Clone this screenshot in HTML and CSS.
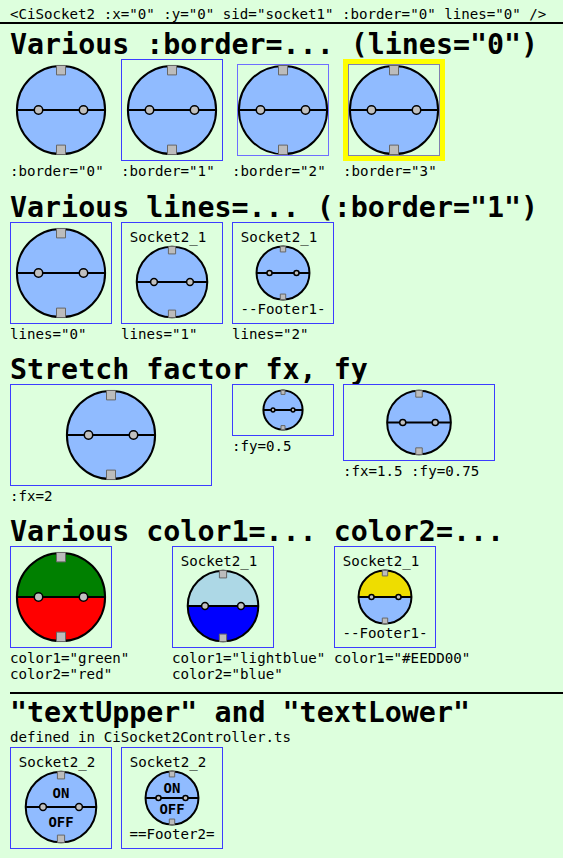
FILE: index.html
```html
<!DOCTYPE html>
<html>
<head>
<meta charset="utf-8">
<link rel="stylesheet" href="styles.css">
</head>
<body>
<div class="top">&lt;CiSocket2 :x="0" :y="0" sid="socket1" :border="0" lines="0" /&gt;</div>
<div class="main">

<div class="title first">Various :border=... (lines="0")</div>
<div class="row">
  <div class="cell">
    <div class="sock b0"><svg viewBox="-50 -50 100 100"><path class="u" d="M-49 0A49 49 0 0 1 49 0Z"/><path class="l" d="M-49 0A49 49 0 0 0 49 0Z"/><circle class="o" r="49"/><path class="m" d="M-49 0H49"/><rect class="q" x="-5" y="-49.5" width="10" height="10.5"/><rect class="q" x="-5" y="39" width="10" height="10.5"/><circle class="p" cx="-25" r="4.7"/><circle class="p" cx="25" r="4.7"/></svg></div>
    <div class="label">:border="0"</div>
  </div>
  <div class="cell">
    <div class="sock"><svg viewBox="-50 -50 100 100"><path class="u" d="M-49 0A49 49 0 0 1 49 0Z"/><path class="l" d="M-49 0A49 49 0 0 0 49 0Z"/><circle class="o" r="49"/><path class="m" d="M-49 0H49"/><rect class="q" x="-5" y="-49.5" width="10" height="10.5"/><rect class="q" x="-5" y="39" width="10" height="10.5"/><circle class="p" cx="-25" r="4.7"/><circle class="p" cx="25" r="4.7"/></svg></div>
    <div class="label">:border="1"</div>
  </div>
  <div class="cell">
    <div class="sock b2"><svg viewBox="-50 -50 100 100"><path class="u" d="M-49 0A49 49 0 0 1 49 0Z"/><path class="l" d="M-49 0A49 49 0 0 0 49 0Z"/><circle class="o" r="49"/><path class="m" d="M-49 0H49"/><rect class="q" x="-5" y="-49.5" width="10" height="10.5"/><rect class="q" x="-5" y="39" width="10" height="10.5"/><circle class="p" cx="-25" r="4.7"/><circle class="p" cx="25" r="4.7"/></svg></div>
    <div class="label">:border="2"</div>
  </div>
  <div class="cell">
    <div class="sock b3"><div class="b3in"><svg viewBox="-50 -50 100 100"><path class="u" d="M-49 0A49 49 0 0 1 49 0Z"/><path class="l" d="M-49 0A49 49 0 0 0 49 0Z"/><circle class="o" r="49"/><path class="m" d="M-49 0H49"/><rect class="q" x="-5" y="-49.5" width="10" height="10.5"/><rect class="q" x="-5" y="39" width="10" height="10.5"/><circle class="p" cx="-25" r="4.7"/><circle class="p" cx="25" r="4.7"/></svg></div></div>
    <div class="label">:border="3"</div>
  </div>
</div>

<div class="title">Various lines=... (:border="1")</div>
<div class="row">
  <div class="cell">
    <div class="sock"><svg viewBox="-50 -50 100 100"><path class="u" d="M-49 0A49 49 0 0 1 49 0Z"/><path class="l" d="M-49 0A49 49 0 0 0 49 0Z"/><circle class="o" r="49"/><path class="m" d="M-49 0H49"/><rect class="q" x="-5" y="-49.5" width="10" height="10.5"/><rect class="q" x="-5" y="39" width="10" height="10.5"/><circle class="p" cx="-25" r="4.7"/><circle class="p" cx="25" r="4.7"/></svg></div>
    <div class="label">lines="0"</div>
  </div>
  <div class="cell">
    <div class="sock"><div class="hd">Socket2_1</div><svg viewBox="-50 -50 100 100"><path class="u" d="M-49 0A49 49 0 0 1 49 0Z"/><path class="l" d="M-49 0A49 49 0 0 0 49 0Z"/><circle class="o" r="49"/><path class="m" d="M-49 0H49"/><rect class="q" x="-5" y="-49.5" width="10" height="10.5"/><rect class="q" x="-5" y="39" width="10" height="10.5"/><circle class="p" cx="-25" r="4.7"/><circle class="p" cx="25" r="4.7"/></svg></div>
    <div class="label">lines="1"</div>
  </div>
  <div class="cell">
    <div class="sock"><div class="hd">Socket2_1</div><svg viewBox="-50 -50 100 100"><path class="u" d="M-49 0A49 49 0 0 1 49 0Z"/><path class="l" d="M-49 0A49 49 0 0 0 49 0Z"/><circle class="o" r="49"/><path class="m" d="M-49 0H49"/><rect class="q" x="-5" y="-49.5" width="10" height="10.5"/><rect class="q" x="-5" y="39" width="10" height="10.5"/><circle class="p" cx="-25" r="4.7"/><circle class="p" cx="25" r="4.7"/></svg><div class="ft">--Footer1-</div></div>
    <div class="label">lines="2"</div>
  </div>
</div>

<div class="title">Stretch factor fx, fy</div>
<div class="row">
  <div class="cell gap-wide">
    <div class="sock fx2"><svg viewBox="-50 -50 100 100"><path class="u" d="M-49 0A49 49 0 0 1 49 0Z"/><path class="l" d="M-49 0A49 49 0 0 0 49 0Z"/><circle class="o" r="49"/><path class="m" d="M-49 0H49"/><rect class="q" x="-5" y="-49.5" width="10" height="10.5"/><rect class="q" x="-5" y="39" width="10" height="10.5"/><circle class="p" cx="-25" r="4.7"/><circle class="p" cx="25" r="4.7"/></svg></div>
    <div class="label">:fx=2</div>
  </div>
  <div class="cell">
    <div class="sock fy05"><svg viewBox="-50 -50 100 100"><path class="u" d="M-49 0A49 49 0 0 1 49 0Z"/><path class="l" d="M-49 0A49 49 0 0 0 49 0Z"/><circle class="o" r="49"/><path class="m" d="M-49 0H49"/><rect class="q" x="-5" y="-49.5" width="10" height="10.5"/><rect class="q" x="-5" y="39" width="10" height="10.5"/><circle class="p" cx="-25" r="4.7"/><circle class="p" cx="25" r="4.7"/></svg></div>
    <div class="label">:fy=0.5</div>
  </div>
  <div class="cell">
    <div class="sock fx15"><svg viewBox="-50 -50 100 100"><path class="u" d="M-49 0A49 49 0 0 1 49 0Z"/><path class="l" d="M-49 0A49 49 0 0 0 49 0Z"/><circle class="o" r="49"/><path class="m" d="M-49 0H49"/><rect class="q" x="-5" y="-49.5" width="10" height="10.5"/><rect class="q" x="-5" y="39" width="10" height="10.5"/><circle class="p" cx="-25" r="4.7"/><circle class="p" cx="25" r="4.7"/></svg></div>
    <div class="label">:fx=1.5 :fy=0.75</div>
  </div>
</div>

<div class="title">Various color1=... color2=...</div>
<div class="row">
  <div class="cell col">
    <div class="sock"><svg class="c-green" viewBox="-50 -50 100 100"><path class="u" d="M-49 0A49 49 0 0 1 49 0Z"/><path class="l" d="M-49 0A49 49 0 0 0 49 0Z"/><circle class="o" r="49"/><path class="m" d="M-49 0H49"/><rect class="q" x="-5" y="-49.5" width="10" height="10.5"/><rect class="q" x="-5" y="39" width="10" height="10.5"/><circle class="p" cx="-25" r="4.7"/><circle class="p" cx="25" r="4.7"/></svg></div>
    <div class="label">color1="green"
color2="red"</div>
  </div>
  <div class="cell col">
    <div class="sock"><div class="hd">Socket2_1</div><svg class="c-lblue" viewBox="-50 -50 100 100"><path class="u" d="M-49 0A49 49 0 0 1 49 0Z"/><path class="l" d="M-49 0A49 49 0 0 0 49 0Z"/><circle class="o" r="49"/><path class="m" d="M-49 0H49"/><rect class="q" x="-5" y="-49.5" width="10" height="10.5"/><rect class="q" x="-5" y="39" width="10" height="10.5"/><circle class="p" cx="-25" r="4.7"/><circle class="p" cx="25" r="4.7"/></svg></div>
    <div class="label">color1="lightblue"
color2="blue"</div>
  </div>
  <div class="cell col">
    <div class="sock"><div class="hd">Socket2_1</div><svg class="c-yel" viewBox="-50 -50 100 100"><path class="u" d="M-49 0A49 49 0 0 1 49 0Z"/><path class="l" d="M-49 0A49 49 0 0 0 49 0Z"/><circle class="o" r="49"/><path class="m" d="M-49 0H49"/><rect class="q" x="-5" y="-49.5" width="10" height="10.5"/><rect class="q" x="-5" y="39" width="10" height="10.5"/><circle class="p" cx="-25" r="4.7"/><circle class="p" cx="25" r="4.7"/></svg><div class="ft">--Footer1-</div></div>
    <div class="label">color1="#EEDD00"</div>
  </div>
</div>

<div class="sep"></div>
<div class="title after-sep">"textUpper" and "textLower"</div>
<div class="note">defined in CiSocket2Controller.ts</div>
<div class="row r5">
  <div class="cell">
    <div class="sock"><div class="hd">Socket2_2</div><svg class="onoff big" viewBox="-50 -50 100 100"><path class="u" d="M-49 0A49 49 0 0 1 49 0Z"/><path class="l" d="M-49 0A49 49 0 0 0 49 0Z"/><circle class="o" r="49"/><path class="m" d="M-49 0H49"/><rect class="q" x="-5" y="-49.5" width="10" height="10.5"/><rect class="q" x="-5" y="39" width="10" height="10.5"/><circle class="p" cx="-25" r="4.7"/><circle class="p" cx="25" r="4.7"/><text class="t" x="0" y="-13">ON</text><text class="t" x="0" y="27.3">OFF</text></svg></div>
  </div>
  <div class="cell">
    <div class="sock"><div class="hd">Socket2_2</div><svg class="onoff small" viewBox="-50 -50 100 100"><path class="u" d="M-49 0A49 49 0 0 1 49 0Z"/><path class="l" d="M-49 0A49 49 0 0 0 49 0Z"/><circle class="o" r="49"/><path class="m" d="M-49 0H49"/><rect class="q" x="-5" y="-49.5" width="10" height="10.5"/><rect class="q" x="-5" y="39" width="10" height="10.5"/><circle class="p" cx="-25" r="4.7"/><circle class="p" cx="25" r="4.7"/><text class="t" x="0" y="-10">ON</text><text class="t" x="0" y="29">OFF</text></svg><div class="ft">==Footer2=</div></div>
  </div>
</div>

</div>
</body>
</html>
```

FILE: styles.css
```css
html, body {
  margin: 0;
  background: #ddffdd;
}
body {
  font-family: "DejaVu Sans Mono", monospace;
  font-size: 14.15px;
  line-height: 16.3px;
  color: #000;
}
.top {
  padding: 6px 10px 0;
  border-bottom: 2px solid #000;
  white-space: pre;
}
.main {
  padding-left: 10px;
}
.title {
  font-size: 28.3px;
  font-weight: bold;
  line-height: 28px;
  margin-top: 14px;
  white-space: pre;
}
.title.first {
  margin-top: 7px;
}
.title.after-sep {
  margin-top: 5px;
}
.sep {
  margin-top: 9px;
  border-top: 2px solid #000;
}
.note {
  margin-top: 2px;
}
.row {
  display: flex;
  gap: 9px;
  align-items: flex-start;
}
.row.r5 {
  margin-top: 2px;
}
.cell {
  display: flex;
  flex-direction: column;
  align-items: flex-start;
}
.cell.gap-wide {
  margin-right: 11px;
}
.cell.col {
  width: 153px;
}
.label {
  margin-top: 2px;
  white-space: pre;
}
.sock {
  box-sizing: border-box;
  width: 102px;
  height: 102px;
  border: 1px solid #3c3cff;
  padding: 5px;
  display: flex;
  flex-direction: column;
}
.sock svg {
  display: block;
  flex: 1;
  width: 100%;
  min-height: 0;
  overflow: visible;
}
.sock .hd,
.sock .ft {
  height: 18px;
  line-height: 18px;
  text-align: center;
  white-space: pre;
  flex: none;
}
.sock .hd {
  padding-right: 8px;
}
.sock.b0 {
  border-color: transparent;
}
.sock.b2 {
  width: 92px;
  height: 92px;
  margin: 5px;
  padding: 0;
  border-color: #6e6eff;
}
.sock.b3 {
  border: 5px solid #ffff00;
  padding: 0;
}
.b3in {
  flex: 1;
  display: flex;
  border: 1px solid #8080b0;
}
.sock.fx2 {
  width: 202px;
}
.sock.fy05 {
  height: 52px;
}
.sock.fx15 {
  width: 152px;
  height: 77px;
}

/* socket drawing */
.u, .l {
  fill: #90bbff;
}
.o {
  fill: none;
  stroke: #000;
  stroke-width: 2px;
  vector-effect: non-scaling-stroke;
}
.m {
  fill: none;
  stroke: #000;
  stroke-width: 2px;
  vector-effect: non-scaling-stroke;
}
.q {
  fill: #bcbcbc;
  stroke: #666;
  stroke-width: 1px;
  vector-effect: non-scaling-stroke;
}
.p {
  fill: #c0c0c0;
  stroke: #000;
  stroke-width: 1.5px;
  vector-effect: non-scaling-stroke;
}
.c-green .u { fill: #008000; }
.c-green .l { fill: #ff0000; }
.c-lblue .u { fill: #add8e6; }
.c-lblue .l { fill: #0000ff; }
.c-yel .u { fill: #eedd00; }

.t {
  font-family: "DejaVu Sans Mono", monospace;
  font-weight: bold;
  text-anchor: middle;
  fill: #000;
}
.onoff.big .t {
  font-size: 19.4px;
}
.onoff.small .t {
  font-size: 25.9px;
}
```
